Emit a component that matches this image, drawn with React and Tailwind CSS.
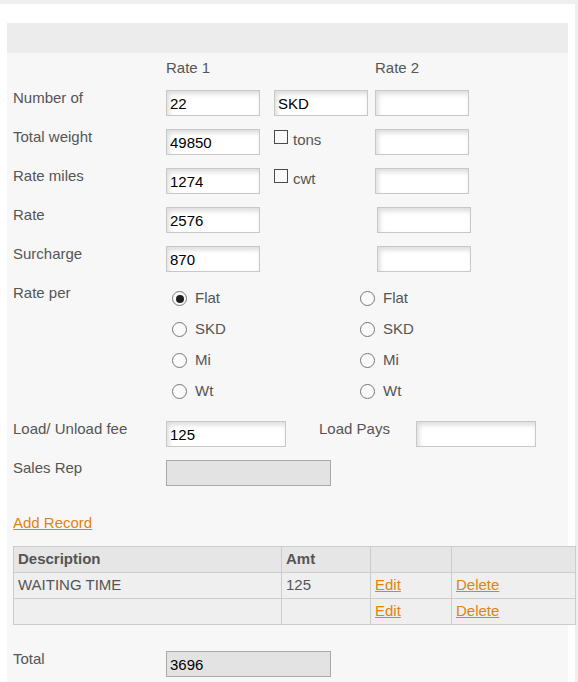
import React from 'react';

const Field = ({ value = '', w = 'w-[94px]', disabled = false }) => (
  <input
    readOnly
    value={value}
    className={`${w} h-[26px] pl-[3px] text-[15px] text-black outline-none ${
      disabled
        ? 'bg-[#e3e3e3] border border-[#a9a9a9]'
        : 'bg-white border border-[#c8c8c8] shadow-[inset_2px_3px_5px_rgba(0,0,0,0.14)]'
    }`}
  />
);

const Check = ({ label }) => (
  <div className="flex items-start pt-[1px]">
    <span className="w-[14px] h-[14px] border border-[#4a4a4a] bg-[#fafafa]"></span>
    <span className="ml-[5px] mt-[1px] text-[15px] leading-[18px] text-[#555]">{label}</span>
  </div>
);

const Radio = ({ label, checked }) => (
  <div className="flex items-center h-[31px]">
    <span className="w-[15px] h-[15px] rounded-full border border-[#767676] bg-[#fafafa] flex items-center justify-center">
      {checked && <span className="w-[8px] h-[8px] rounded-full bg-[#1f1f1f]"></span>}
    </span>
    <span className="ml-[8px] text-[15px] text-[#555]">{label}</span>
  </div>
);

const Label = ({ children }) => (
  <div className="w-[153px] shrink-0 text-[15px] leading-[16px] text-[#555]">{children}</div>
);

const App = () => {
  const rows = [
    { label: 'Number of', v1: '22', mid: <Field value="SKD" />, r2: 'ml-[7px]' },
    { label: 'Total weight', v1: '49850', mid: <Check label="tons" />, r2: 'ml-[7px]' },
    { label: 'Rate miles', v1: '1274', mid: <Check label="cwt" />, r2: 'ml-[7px]' },
    { label: 'Rate', v1: '2576', mid: null, r2: 'ml-[9px]' },
    { label: 'Surcharge', v1: '870', mid: null, r2: 'ml-[9px]' },
  ];

  const items = [
    { path: 'WAITING TIME', amt: '125' },
    { path: '', amt: '' },
  ];

  return (
    <div className="min-h-screen bg-[#efefef] pt-[4px] font-['Liberation_Sans',Arial,sans-serif]">
      <div className="w-[575px] min-h-[678px] bg-white pt-[19px] pl-[7px]">
        <div className="w-[561px] min-h-[659px] bg-[#f7f7f7]">
          {/* Header bar */}
          <div className="h-[30px] bg-[#ececec]"></div>

          <div className="pl-[6px]">
            {/* Column titles */}
            <div className="flex mt-[6px] text-[15px] leading-[18px] text-[#555]">
              <div className="w-[153px]"></div>
              <div className="w-[209px]">Rate 1</div>
              <div>Rate 2</div>
            </div>

            {/* Input rows */}
            <div className="mt-[13px]">
              {rows.map((row) => (
                <div key={row.label} className="flex items-start mb-[13px]">
                  <Label>{row.label}</Label>
                  <div className="w-[108px] shrink-0">
                    <Field value={row.v1} />
                  </div>
                  <div className="w-[94px] shrink-0">{row.mid}</div>
                  <div className={row.r2}>
                    <Field />
                  </div>
                </div>
              ))}
            </div>

            {/* Rate per */}
            <div className="flex items-start">
              <Label>Rate per</Label>
              <div className="w-[194px] shrink-0 pl-[6px] -mt-[2px]">
                <Radio label="Flat" checked />
                <Radio label="SKD" />
                <Radio label="Mi" />
                <Radio label="Wt" />
              </div>
              <div className="-mt-[2px]">
                <Radio label="Flat" />
                <Radio label="SKD" />
                <Radio label="Mi" />
                <Radio label="Wt" />
              </div>
            </div>

            {/* Load / unload */}
            <div className="flex items-start mt-[14px]">
              <Label>Load/ Unload fee</Label>
              <Field value="125" w="w-[120px]" />
              <div className="ml-[33px] w-[97px] text-[15px] leading-[16px] text-[#555]">Load Pays</div>
              <Field w="w-[120px]" />
            </div>

            <div className="flex items-start mt-[13px]">
              <Label>Sales Rep</Label>
              <Field w="w-[165px]" disabled />
            </div>

            <div className="mt-[28px] text-[15px] leading-[18px]">
              <a href="#" className="text-[#e2830e] underline">Add Record</a>
            </div>

            {/* Records table */}
            <table className="mt-[14px] w-[562px] border-collapse text-[15px] text-[#555] table-fixed">
              <colgroup>
                <col className="w-[268px]" />
                <col className="w-[89px]" />
                <col className="w-[81px]" />
                <col className="w-[124px]" />
              </colgroup>
              <thead>
                <tr className="h-[26px] bg-[#e6e6e6]">
                  <th className="border border-[#cccccc] text-left font-bold pl-[4px]">Description</th>
                  <th className="border border-[#cccccc] text-left font-bold pl-[4px]">Amt</th>
                  <th className="border border-[#cccccc]"></th>
                  <th className="border border-[#cccccc]"></th>
                </tr>
              </thead>
              <tbody>
                {items.map((item, i) => (
                  <tr key={i} className="h-[26px] bg-[#efefef]">
                    <td className="border border-[#cccccc] pl-[4px]">{item.path}</td>
                    <td className="border border-[#cccccc] pl-[4px]">{item.amt}</td>
                    <td className="border border-[#cccccc] pl-[4px]">
                      <a href="#" className="text-[#e2830e] underline">Edit</a>
                    </td>
                    <td className="border border-[#cccccc] pl-[4px]">
                      <a href="#" className="text-[#e2830e] underline">Delete</a>
                    </td>
                  </tr>
                ))}
              </tbody>
            </table>

            {/* Total */}
            <div className="flex items-start mt-[26px]">
              <Label>Total</Label>
              <Field value="3696" w="w-[165px]" disabled />
            </div>
          </div>
        </div>
      </div>
    </div>
  );
};

export default App;
